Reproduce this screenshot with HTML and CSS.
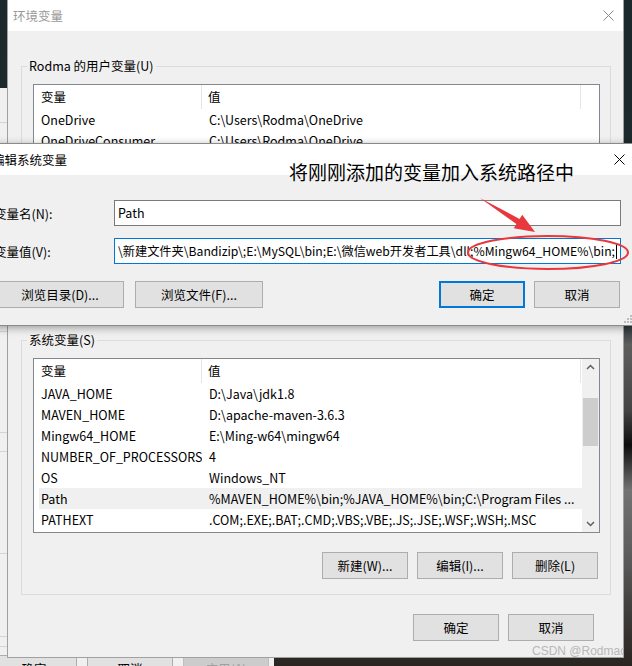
FILE: index.html
```html
<!DOCTYPE html>
<html lang="zh-CN">
<head>
    <meta charset="UTF-8">
    <title>环境变量</title>
    <link rel="stylesheet" href="styles.css">
</head>
<body>
<!-- window behind, only its left strip and buttons show -->
<div class="backwin">
    <div class="bw-lines">
        <div class="l1"></div>
        <div class="l2"></div>
        <div class="l3"></div>
        <div class="l4"></div>
        <div class="l5"></div>
        <div class="l6"></div>
        <div class="l7"></div>
    </div>
    <div class="bw-btns">
        <div class="btn">确定</div>
        <div class="btn">取消</div>
        <div class="btn dis">应用(A)</div>
    </div>
</div>

<div class="win main">
    <div class="titlebar">
        <span class="title dim">环境变量</span>
        <svg class="close" width="11" height="11" viewBox="0 0 11 11"><path d="M0.5 0.5L10.5 10.5M10.5 0.5L0.5 10.5" stroke="#8c8c8c" stroke-width="1"/></svg>
    </div>
    <div class="body">
        <fieldset class="group user">
            <legend>Rodma 的用户变量(U)</legend>
            <div class="list">
                <div class="cols">
                    <div class="head"><div class="c1">变量</div><div class="c2">值</div></div>
                    <div class="row"><div class="c1">OneDrive</div><div class="c2">C:\Users\Rodma\OneDrive</div></div>
                    <div class="row"><div class="c1">OneDriveConsumer</div><div class="c2">C:\Users\Rodma\OneDrive</div></div>
                    <div class="row"><div class="c1">Path</div><div class="c2">C:\Users\Rodma\AppData\Local\Microsoft\WindowsApps;</div></div>
                </div>
            </div>
        </fieldset>
        <fieldset class="group sys">
            <legend>系统变量(S)</legend>
            <div class="list">
                <div class="cols">
                    <div class="head"><div class="c1">变量</div><div class="c2">值</div></div>
                    <div class="row"><div class="c1">JAVA_HOME</div><div class="c2">D:\Java\jdk1.8</div></div>
                    <div class="row"><div class="c1">MAVEN_HOME</div><div class="c2">D:\apache-maven-3.6.3</div></div>
                    <div class="row"><div class="c1">Mingw64_HOME</div><div class="c2">E:\Ming-w64\mingw64</div></div>
                    <div class="row"><div class="c1">NUMBER_OF_PROCESSORS</div><div class="c2">4</div></div>
                    <div class="row"><div class="c1">OS</div><div class="c2">Windows_NT</div></div>
                    <div class="row sel"><div class="c1">Path</div><div class="c2">%MAVEN_HOME%\bin;%JAVA_HOME%\bin;C:\Program Files ...</div></div>
                    <div class="row"><div class="c1">PATHEXT</div><div class="c2">.COM;.EXE;.BAT;.CMD;.VBS;.VBE;.JS;.JSE;.WSF;.WSH;.MSC</div></div>
                </div>
                <div class="vscroll">
                    <svg width="17" height="17" viewBox="0 0 17 17"><path d="M5 10L8.5 6.5L12 10" fill="none" stroke="#606060" stroke-width="1.5"/></svg>
                    <div class="track"><div class="thumb"></div></div>
                    <svg width="17" height="17" viewBox="0 0 17 17"><path d="M5 7L8.5 10.5L12 7" fill="none" stroke="#606060" stroke-width="1.5"/></svg>
                </div>
            </div>
            <div class="btnrow">
                <div class="btn">新建(W)...</div>
                <div class="btn">编辑(I)...</div>
                <div class="btn">删除(L)</div>
            </div>
        </fieldset>
        <div class="btnrow foot">
            <div class="btn">确定</div>
            <div class="btn">取消</div>
        </div>
    </div>
</div>

<div class="win edit">
    <div class="titlebar">
        <span class="title">编辑系统变量</span>
        <svg class="close" width="11" height="11" viewBox="0 0 11 11"><path d="M0.5 0.5L10.5 10.5M10.5 0.5L0.5 10.5" stroke="#000" stroke-width="1"/></svg>
    </div>
    <div class="ebody">
        <div class="field">
            <span class="flabel">变量名(N):</span>
            <div class="input"><span class="val">Path</span></div>
        </div>
        <div class="field">
            <span class="flabel">变量值(V):</span>
            <div class="input focus"><span class="val">\新建文件夹\Bandizip\;E:\MySQL\bin;E:\微信web开发者工具\dll;%Mingw64_HOME%\bin;</span><i class="caret"></i></div>
        </div>
        <div class="ebtns">
            <div class="btn wide">浏览目录(D)...</div>
            <div class="btn wide">浏览文件(F)...</div>
            <div class="spacer"></div>
            <div class="btn def">确定</div>
            <div class="btn">取消</div>
        </div>
    </div>
    <svg class="grip" width="9" height="9" viewBox="0 0 9 9" fill="#bdbdbd">
        <rect x="7" y="1" width="2" height="2"/><rect x="4" y="4" width="2" height="2"/><rect x="7" y="4" width="2" height="2"/>
        <rect x="1" y="7" width="2" height="2"/><rect x="4" y="7" width="2" height="2"/><rect x="7" y="7" width="2" height="2"/>
    </svg>
</div>

<!-- red markup drawn over the screenshot -->
<svg class="annot" width="632" height="666" viewBox="0 0 632 666">
    <polygon points="480,198 519.6,218.9 522.2,214.7 535,232 513.8,228.3 516.4,224.1" fill="#e8383d"/>
    <ellipse cx="548" cy="252.5" rx="80" ry="16.5" fill="none" stroke="#e8383d" stroke-width="2"/>
</svg>
<div class="note">将刚刚添加的变量加入系统路径中</div>
<div class="mark">CSDN @Rodmadi</div>
</body>
</html>
```

FILE: styles.css
```css
*{
    box-sizing: border-box;
}
html,body{
    margin:0;
    padding:0;
}
body{
    position: relative;
    width:632px;
    height:666px;
    overflow: hidden;
    font-family: "Noto Sans CJK SC", "Microsoft YaHei", sans-serif;
    font-size: 12.5px;
    color: #000;
    background: linear-gradient(#1c292c 0, #1e2b2e 320px, #5e5e5e 345px, #444 410px, #0e0e0e 445px, #737373 490px, #5a5a5a 560px, #3b3936 620px, #2a2521 666px);
}

/* windows */
.win{
    position: absolute;
    background: #f0f0f0;
    overflow: hidden;
}
.titlebar{
    height:31px;
    background: #fff;
    display: flex;
    align-items: center;
}
.title{
    flex-grow: 1;
    line-height: 20px;
}
.title.dim{
    color: #999;
}
.main{
    left:7px;
    top:0;
    width:617px;
    height:658px;
    border:1px solid #a0a0a0;
    border-top:0;
}
.main .titlebar{
    padding-left:5px;
}
.main .close{
    margin-right:9px;
}
.body{
    padding:0 12px 0 13px;
}

/* group boxes */
.group{
    margin:0;
    border:1px solid #dcdcdc;
    padding:9px 10px 0 11px;
    min-width: 0;
}
.group legend{
    margin-left:-6px;
    padding:0 2px;
    line-height: 18px;
}
.user{
    margin-top:26px;
    height:258px;
}
.sys{
    margin-top:16px;
    padding-bottom:15px;
}
.list{
    display: flex;
    background: #fff;
    border:1px solid #828790;
    height:175px;
}
.cols{
    flex-grow: 1;
    overflow: hidden;
}
.head{
    display: flex;
    height:24px;
    align-items: center;
}
.head .c1{
    width:168px;
    padding-left:7px;
    border-right:1px solid #e5e5e5;
    height:100%;
    line-height: 24px;
}
.head .c2{
    width:379px;
    padding-left:6px;
    border-right:1px solid #e5e5e5;
    height:100%;
    line-height: 24px;
}
.row{
    display: flex;
    height:21px;
    align-items: center;
    margin-left:5px;
    white-space: nowrap;
}
.row .c1{
    width:163px;
    padding-left:2px;
    overflow: hidden;
}
.row .c2{
    padding-left:7px;
    overflow: hidden;
    flex-grow: 1;
}
.row.sel{
    background: #f0f0f0;
}
.vscroll{
    width:17px;
    background: #f0f0f0;
    display: flex;
    flex-direction: column;
}
.vscroll svg{
    display: block;
}
.track{
    flex-grow: 1;
    padding:22px 1px 0 1px;
}
.thumb{
    height:48px;
    background: #cdcdcd;
}

/* buttons */
.btn{
    width:86px;
    height:27px;
    background: #e1e1e1;
    border:1px solid #adadad;
    display: flex;
    align-items: center;
    justify-content: center;
    white-space: nowrap;
}
.btnrow{
    display: flex;
    justify-content: flex-end;
    gap:9px;
    margin-top:19px;
    margin-right:2px;
}
.btnrow.foot{
    margin-right:17px;
    gap:9px;
}

/* edit dialog */
.edit{
    left:-16px;
    top:143px;
    width:649px;
    height:183px;
    border:1px solid #8a8a8a;
    box-shadow: 0 2px 8px rgba(0,0,0,.35);
}
.edit .titlebar{
    padding-left:7px;
}
.edit .close{
    margin-right:7px;
}
.ebody{
    padding:25px 11px 0 9px;
}
.field{
    display: flex;
    align-items: center;
    margin-bottom:12px;
}
.flabel{
    width:120px;
}
.input{
    width:507px;
    height:26px;
    background: #fff;
    border:1px solid #7a7a7a;
    padding:0 3px;
    display: flex;
    align-items: center;
    overflow: hidden;
    white-space: nowrap;
}
.input.focus{
    border-color: #0078d7;
    justify-content: flex-end;
    font-size: 12.2px;
}
.val{
    line-height: 20px;
}
.caret{
    display: block;
    flex-shrink: 0;
    width:1px;
    height:16px;
    background: #000;
    margin-left:1px;
}
.ebtns{
    display: flex;
    margin:17px 1px 0 2px;
}
.btn.wide{
    width:128px;
    margin-right:11px;
}
.spacer{
    flex-grow: 1;
}
.btn.def{
    border:2px solid #0078d7;
    margin-right:9px;
}
.grip{
    position: absolute;
    right:0;
    bottom:2px;
}

/* back window */
.backwin{
    position: absolute;
    left:-20px;
    top:88px;
    width:294px;
    height:600px;
    background: #f0f0f0;
    display: flex;
    flex-direction: column;
    justify-content: space-between;
}
.bw-lines div{
    border-bottom:1px solid #d4d4d4;
}
.l1{height:35px;}
.l2{height:209px;}
.l3{height:101px;}
.l4{height:19px;}
.l5{height:102px;}
.l6{height:83px;}
.l7{height:10px;}
.bw-btns{
    display: flex;
    gap:10px;
    padding:0 0 6px 11px;
}
.bw-btns .btn{
    width:86px;
}
.bw-btns .dis{
    color: #a0a0a0;
    background: #cccccc;
    border-color: #bfbfbf;
}

/* annotation overlay */
.annot{
    position: absolute;
    left:0;
    top:0;
    pointer-events: none;
}
.note{
    position: absolute;
    left:289px;
    top:160px;
    font-size: 19px;
    line-height: 24px;
    white-space: nowrap;
}
.mark{
    position: absolute;
    left:532px;
    top:643px;
    width:92px;
    overflow: hidden;
    white-space: nowrap;
    font-family: "Liberation Sans", Arial, sans-serif;
    font-size: 12px;
    line-height: 16px;
    color: #b8b8b8;
}
```
